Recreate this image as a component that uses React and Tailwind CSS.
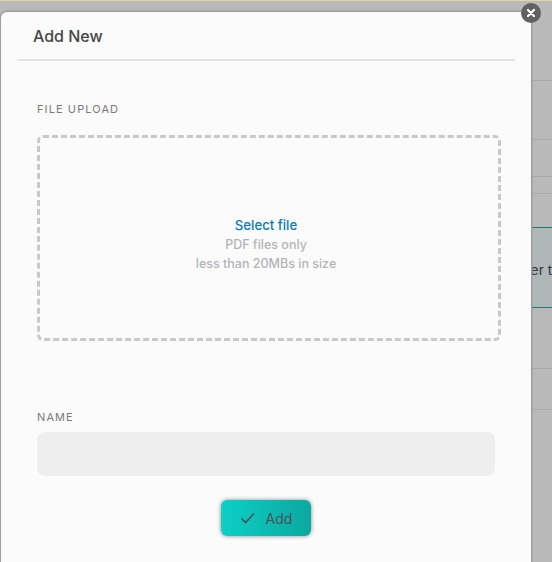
import React from "react";

function Row({ className, children }) {
  return <div className={`w-full shrink-0 ${className}`}>{children}</div>;
}

export default function App() {
  return (
    <div className="relative w-[552px] h-[562px] overflow-hidden bg-[#b9b9b9] font-['Inter','Liberation_Sans',sans-serif]">
      {/* dimmed page behind the dialog */}
      <div className="flex flex-col w-full">
        <Row className="h-px bg-[#e6d3a8]" />
        <Row className="h-[80px] border-b border-[#a9a9a9]" />
        <Row className="h-[59px] border-b border-[#a9a9a9]" />
        <Row className="h-[37px] border-b border-[#a9a9a9]" />
        <Row className="h-[17px] border-b border-[#a9a9a9]" />
        <Row className="h-[33px]" />
        <Row className="h-[81px] bg-[#afb7b7] border-y border-[#1f7a78] flex items-center justify-end pt-[6px]">
          <span className="text-[15px] text-[#33363f] font-['Liberation_Sans',sans-serif] whitespace-nowrap">er t</span>
        </Row>
        <Row className="h-[61px] border-b border-[#a9a9a9]" />
        <Row className="h-[41px] border-b border-[#a9a9a9]" />
      </div>

      {/* dialog */}
      <div className="absolute left-[1px] top-[12px] w-[530px] h-[560px] bg-[#fbfbfb] rounded-tl-[6px] shadow-[0_0_0_1.5px_#9e9e9e] flex flex-col">
        <div className="mx-4 h-[49px] border-b-2 border-[#e4e4e4] pl-4 pt-[13px] text-[16px] leading-[22px] font-medium text-[#474747]">
          Add New
        </div>

        <div className="ml-[36px] mt-[41px] text-[11px] leading-[14px] tracking-[1.1px] text-[#7a7a7a]">
          FILE UPLOAD
        </div>

        <div className="ml-[36px] mt-[19px] w-[464px] h-[206px] border-[3px] border-dashed border-[#c9c9cc] rounded-[6px] flex flex-col items-center justify-center pt-[11px] pr-[6px]">
          <div className="text-[13.2px] leading-[20px] font-medium text-[#0a78c2]">Select file</div>
          <div className="text-[12.5px] leading-[19px] font-medium text-[#b4b4b8]">PDF files only</div>
          <div className="text-[12.5px] leading-[19px] font-medium text-[#b4b4b8]">less than 20MBs in size</div>
        </div>

        <div className="ml-[36px] mt-[69px] text-[11px] leading-[14px] tracking-[1.1px] text-[#7a7a7a]">
          NAME
        </div>

        <div className="ml-[36px] mt-[8px] w-[458px] h-[44px] rounded-[8px] bg-[#eeeeee]" />

        <button className="self-start ml-[220px] mt-[24px] w-[90px] h-[36px] rounded-[6px] bg-gradient-to-r from-[#0dd0c6] to-[#0ba89e] shadow-[0_0_4px_rgba(0,0,0,0.45)] flex items-center justify-center gap-[10px] text-[14px] text-[#4a5058]">
          <svg width="16" height="12" viewBox="0 0 16 12" fill="none" stroke="#4a5058" strokeWidth="1.6">
            <path d="M1.5 6.5 L5.5 10.5 L14 1.5" />
          </svg>
          Add
        </button>
      </div>

      {/* close button */}
      <button className="absolute left-[521px] top-[3px] w-5 h-5 rounded-full bg-[#616161] flex items-center justify-center">
        <svg width="10" height="10" viewBox="0 0 10 10" stroke="#ffffff" strokeWidth="2.2" strokeLinecap="round">
          <path d="M2 2 L8 8 M8 2 L2 8" />
        </svg>
      </button>
    </div>
  );
}
